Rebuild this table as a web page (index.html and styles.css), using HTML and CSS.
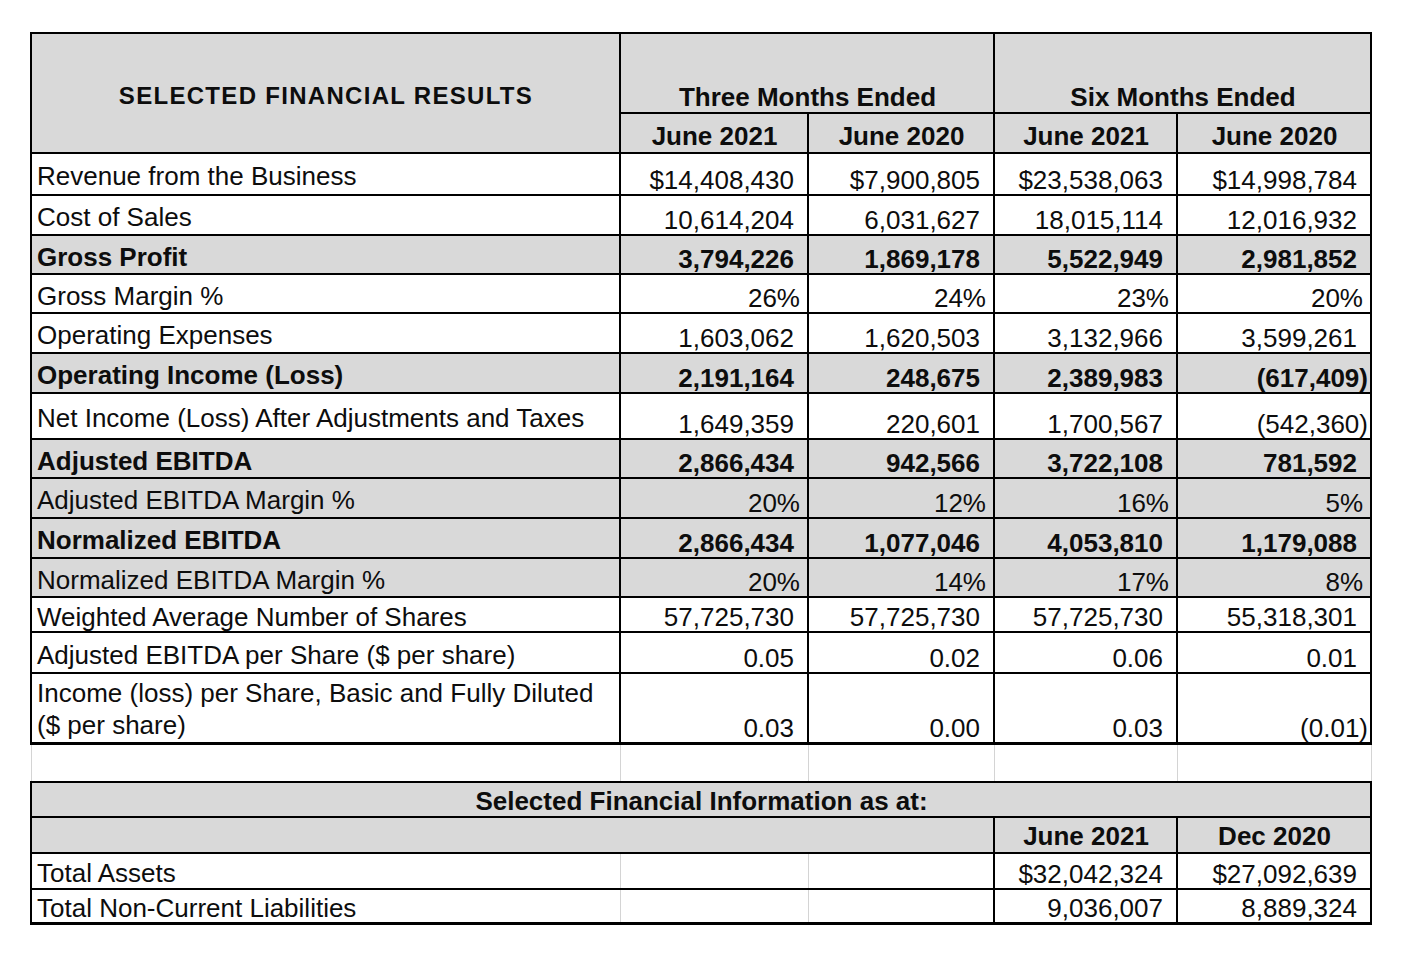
FILE: index.html
```html
<!DOCTYPE html>
<html lang="en">
<head>
<meta charset="utf-8">
<title>Selected Financial Results</title>
<link rel="stylesheet" href="styles.css">
</head>
<body>
<div class="sheet">
<table class="fin">
  <colgroup>
    <col class="c-label"><col class="c-a"><col class="c-b"><col class="c-c"><col class="c-d">
  </colgroup>
  <tr class="hd1">
    <th rowspan="2" class="title">SELECTED FINANCIAL RESULTS</th>
    <th colspan="2" class="period">Three Months Ended</th>
    <th colspan="2" class="period">Six Months Ended</th>
  </tr>
  <tr class="hd2">
    <th>June 2021</th><th>June 2020</th><th>June 2021</th><th>June 2020</th>
  </tr>
  <tr class="r42">
    <td class="label">Revenue from the Business</td>
    <td class="v">$14,408,430</td><td class="v">$7,900,805</td><td class="v">$23,538,063</td><td class="v">$14,998,784</td>
  </tr>
  <tr class="r40">
    <td class="label">Cost of Sales</td>
    <td class="v">10,614,204</td><td class="v">6,031,627</td><td class="v">18,015,114</td><td class="v">12,016,932</td>
  </tr>
  <tr class="r39 shade strong">
    <td class="label">Gross Profit</td>
    <td class="v">3,794,226</td><td class="v">1,869,178</td><td class="v">5,522,949</td><td class="v">2,981,852</td>
  </tr>
  <tr class="r39">
    <td class="label">Gross Margin %</td>
    <td class="v pct">26%</td><td class="v pct">24%</td><td class="v pct">23%</td><td class="v pct">20%</td>
  </tr>
  <tr class="r40">
    <td class="label">Operating Expenses</td>
    <td class="v">1,603,062</td><td class="v">1,620,503</td><td class="v">3,132,966</td><td class="v">3,599,261</td>
  </tr>
  <tr class="r40 shade strong">
    <td class="label">Operating Income (Loss)</td>
    <td class="v">2,191,164</td><td class="v">248,675</td><td class="v">2,389,983</td><td class="v neg">(617,409)</td>
  </tr>
  <tr class="r46">
    <td class="label">Net Income (Loss) After Adjustments and Taxes</td>
    <td class="v">1,649,359</td><td class="v">220,601</td><td class="v">1,700,567</td><td class="v neg">(542,360)</td>
  </tr>
  <tr class="r39 shade strong">
    <td class="label">Adjusted EBITDA</td>
    <td class="v">2,866,434</td><td class="v">942,566</td><td class="v">3,722,108</td><td class="v">781,592</td>
  </tr>
  <tr class="r40 shade">
    <td class="label">Adjusted EBITDA Margin %</td>
    <td class="v pct">20%</td><td class="v pct">12%</td><td class="v pct">16%</td><td class="v pct">5%</td>
  </tr>
  <tr class="r40 shade strong">
    <td class="label">Normalized EBITDA</td>
    <td class="v">2,866,434</td><td class="v">1,077,046</td><td class="v">4,053,810</td><td class="v">1,179,088</td>
  </tr>
  <tr class="r39 shade">
    <td class="label">Normalized EBITDA Margin %</td>
    <td class="v pct">20%</td><td class="v pct">14%</td><td class="v pct">17%</td><td class="v pct">8%</td>
  </tr>
  <tr class="r35">
    <td class="label">Weighted Average Number of Shares</td>
    <td class="v">57,725,730</td><td class="v">57,725,730</td><td class="v">57,725,730</td><td class="v">55,318,301</td>
  </tr>
  <tr class="r41">
    <td class="label">Adjusted EBITDA per Share ($ per share)</td>
    <td class="v">0.05</td><td class="v">0.02</td><td class="v">0.06</td><td class="v">0.01</td>
  </tr>
  <tr class="r70 last">
    <td class="label wrap">Income (loss) per Share, Basic and Fully Diluted<br>($ per share)</td>
    <td class="v">0.03</td><td class="v">0.00</td><td class="v">0.03</td><td class="v neg">(0.01)</td>
  </tr>
  <tr class="gap">
    <td></td><td></td><td></td><td></td><td></td>
  </tr>
  <tr class="r35 shade">
    <th colspan="5" class="section">Selected Financial Information as at:</th>
  </tr>
  <tr class="r36 shade">
    <th colspan="3"></th><th>June 2021</th><th>Dec 2020</th>
  </tr>
  <tr class="r36 asset">
    <td class="label">Total Assets</td>
    <td class="blank"></td><td class="blank"></td>
    <td class="v">$32,042,324</td><td class="v">$27,092,639</td>
  </tr>
  <tr class="r34 asset last">
    <td class="label">Total Non-Current Liabilities</td>
    <td class="blank"></td><td class="blank"></td>
    <td class="v">9,036,007</td><td class="v">8,889,324</td>
  </tr>
</table>
</div>
</body>
</html>
```

FILE: styles.css
```css
* { box-sizing: border-box; }

body {
  margin: 0;
  background: #ffffff;
  color: #0d0d0d;
  font-family: "Liberation Sans", Arial, sans-serif;
}

.sheet {
  padding: 32px 0 0 30px;
}

.fin {
  border-collapse: collapse;
  table-layout: fixed;
  width: 1340px;
  font-size: 26px;
}

.c-label { width: 589px; }
.c-a { width: 188px; }
.c-b { width: 186px; }
.c-c { width: 183px; }
.c-d { width: 194px; }

.fin td,
.fin th {
  border: 2px solid #000;
  padding: 0 4px 2px 5px;
  line-height: 28px;
  white-space: nowrap;
  overflow: hidden;
}

.fin th {
  font-weight: 700;
  background: #d9d9d9;
  text-align: center;
  vertical-align: bottom;
}

.fin th.period {
  padding-bottom: 1px;
}

.fin th.title {
  vertical-align: middle;
  font-size: 24px;
  letter-spacing: 1.3px;
  padding-top: 6px;
  padding-bottom: 0;
}

.hd1 { height: 80px; }
.hd2 { height: 40px; }
.r34 { height: 34px; }
.r35 { height: 35px; }
.r36 { height: 36px; }
.r39 { height: 39px; }
.r40 { height: 40px; }
.r41 { height: 41px; }
.r42 { height: 42px; }
.r46 { height: 46px; }
.r70 { height: 70px; }

.fin td.label {
  text-align: left;
  vertical-align: middle;
  padding-top: 4px;
  padding-bottom: 0;
}

.fin td.label.wrap {
  white-space: normal;
  line-height: 32px;
  padding-top: 2px;
}

.fin td.v {
  text-align: right;
  vertical-align: bottom;
  padding-right: 13px;
  padding-bottom: 0;
}

.fin td.v.pct { padding-right: 7px; }
.fin td.v.neg { padding-right: 2px; }

.shade td { background: #d9d9d9; }
.strong td { font-weight: 700; }

.last td { border-bottom: 3px solid #000; }

.fin .gap { height: 39px; }
.fin .gap td {
  border: 1px solid #d4d4d4;
  background: #fff;
}

.fin th.section {
  vertical-align: middle;
  padding-top: 3px;
  padding-bottom: 0;
}

.fin .asset td.label { border-right: 1px solid #d4d4d4; }
.fin .asset td.blank {
  border-left: 1px solid #d4d4d4;
  border-right: 1px solid #d4d4d4;
}
.fin .asset td.blank + td.blank { border-right: 2px solid #000; }
.fin .asset.last td { border-bottom: 3px solid #000; }
```
